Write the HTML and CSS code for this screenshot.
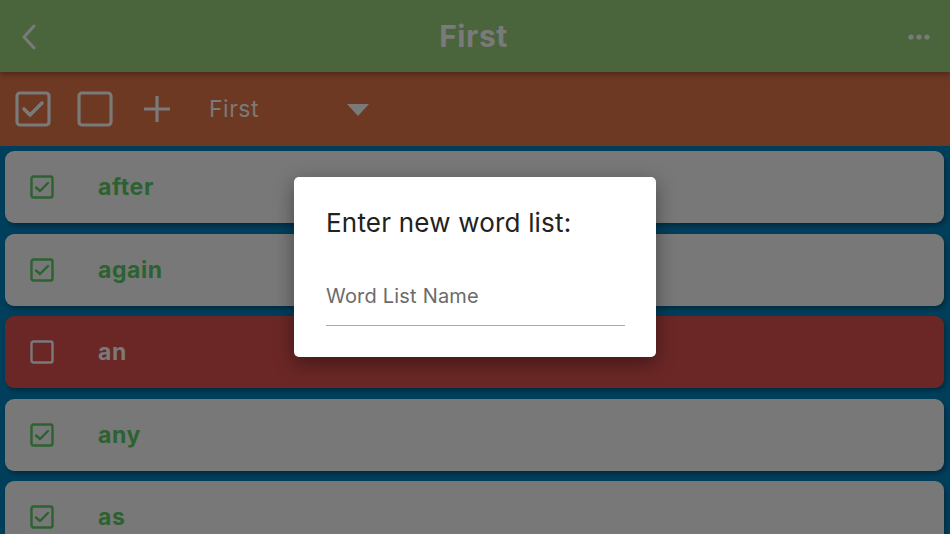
FILE: index.html
```html
<!DOCTYPE html>
<html>
<head>
<meta charset="utf-8">
<link rel="stylesheet" href="styles.css">
</head>
<body>
<div class="app">
  <header class="nav">
    <svg class="back" width="16" height="26" viewBox="0 0 16 26"><path d="M13 2 L3 13 L13 24" fill="none" stroke="#7a7a7a" stroke-width="3" stroke-linecap="round" stroke-linejoin="round"/></svg>
    <div class="title">First</div>
    <svg class="more" width="22" height="6" viewBox="0 0 22 6"><circle cx="3" cy="3" r="2.6" fill="#7a7a7a"/><circle cx="11" cy="3" r="2.6" fill="#7a7a7a"/><circle cx="19" cy="3" r="2.6" fill="#7a7a7a"/></svg>
  </header>
  <div class="toolbar">
    <svg class="tb-icon" width="36" height="36" viewBox="0 0 36 36"><rect x="2" y="2" width="32" height="32" rx="3" fill="none" stroke="#7a7a7a" stroke-width="3.2"/><path d="M9 18 L15 24 L27 12" fill="none" stroke="#7a7a7a" stroke-width="3.6" stroke-linecap="round" stroke-linejoin="round"/></svg>
    <svg class="tb-icon" width="36" height="36" viewBox="0 0 36 36"><rect x="2" y="2" width="32" height="32" rx="3" fill="none" stroke="#7a7a7a" stroke-width="3.2"/></svg>
    <svg class="tb-plus" width="28" height="28" viewBox="0 0 28 28"><path d="M14 1 V27 M1 14 H27" stroke="#7a7a7a" stroke-width="3.2"/></svg>
    <div class="picker">
      <span class="picker-text">First</span>
      <svg width="22" height="12" viewBox="0 0 22 12"><path d="M0 0 H22 L11 12 Z" fill="#7a7a7a"/></svg>
    </div>
  </div>
  <main class="list">
    <div class="row"><svg class="cb" width="24" height="24" viewBox="0 0 24 24"><rect x="1.5" y="1.5" width="21" height="21" rx="2" fill="none" stroke="#2b6230" stroke-width="2.4"/><path d="M6 12.5 L10 16 L18 8" fill="none" stroke="#2b6230" stroke-width="2.4" stroke-linecap="round" stroke-linejoin="round"/></svg><span class="word">after</span></div>
    <div class="row"><svg class="cb" width="24" height="24" viewBox="0 0 24 24"><rect x="1.5" y="1.5" width="21" height="21" rx="2" fill="none" stroke="#2b6230" stroke-width="2.4"/><path d="M6 12.5 L10 16 L18 8" fill="none" stroke="#2b6230" stroke-width="2.4" stroke-linecap="round" stroke-linejoin="round"/></svg><span class="word">again</span></div>
    <div class="row row-off"><svg class="cb" width="24" height="24" viewBox="0 0 24 24"><rect x="1.5" y="1.5" width="21" height="21" rx="2" fill="none" stroke="#7a7a7a" stroke-width="2.4"/></svg><span class="word">an</span></div>
    <div class="row"><svg class="cb" width="24" height="24" viewBox="0 0 24 24"><rect x="1.5" y="1.5" width="21" height="21" rx="2" fill="none" stroke="#2b6230" stroke-width="2.4"/><path d="M6 12.5 L10 16 L18 8" fill="none" stroke="#2b6230" stroke-width="2.4" stroke-linecap="round" stroke-linejoin="round"/></svg><span class="word">any</span></div>
    <div class="row"><svg class="cb" width="24" height="24" viewBox="0 0 24 24"><rect x="1.5" y="1.5" width="21" height="21" rx="2" fill="none" stroke="#2b6230" stroke-width="2.4"/><path d="M6 12.5 L10 16 L18 8" fill="none" stroke="#2b6230" stroke-width="2.4" stroke-linecap="round" stroke-linejoin="round"/></svg><span class="word">as</span></div>
  </main>
  <div class="dialog">
    <div class="dialog-title">Enter new word list:</div>
    <div class="field">Word List Name</div>
  </div>
</div>
</body>
</html>
```

FILE: styles.css
```css
* { box-sizing: border-box; }
html, body { margin: 0; padding: 0; }
body {
  width: 950px;
  height: 534px;
  overflow: hidden;
  font-family: Inter, "Open Sans", sans-serif;
  background: #003f5c;
}
.app {
  position: relative;
  width: 950px;
  height: 534px;
  overflow: hidden;
  background: #003f5c;
}
.nav {
  height: 72px;
  background: #4a653c;
  display: flex;
  align-items: center;
  justify-content: space-between;
  padding: 0 20px 0 21px;
  position: relative;
  z-index: 2;
  box-shadow: 0 2px 6px rgba(0,0,0,0.35);
}
.back { margin-top: 2px; }
.title {
  font-size: 30px;
  font-weight: 700;
  color: #7a7a7a;
  margin-left: 2px;
  letter-spacing: 0.6px;
}
.more { margin-top: 1px; }
.toolbar {
  height: 74px;
  background: #6e3923;
  display: flex;
  align-items: center;
  padding: 0 0 0 15px;
  position: relative;
  z-index: 1;
}
.tb-icon { margin-right: 26px; }
.tb-plus { margin-left: 4px; margin-right: 38px; }
.picker {
  display: flex;
  align-items: center;
  width: 160px;
  justify-content: space-between;
}
.picker-text {
  font-size: 23px;
  color: #7a7a7a;
  letter-spacing: 0.5px;
}
.picker svg { margin-top: 2px; }
.list {
  display: flex;
  flex-direction: column;
  gap: 10.5px;
  padding: 5px 6px 0 5px;
}
.row {
  flex: none;
  height: 72px;
  border-radius: 9px;
  background: #787878;
  display: flex;
  align-items: center;
  padding-left: 25px;
  box-shadow: 2px 3px 5px rgba(0,0,0,0.3);
}
.row-off { background: #6b2726; }
.cb { flex: none; margin-right: 44px; }
.word {
  font-size: 23px;
  font-weight: 700;
  color: #2b6230;
  letter-spacing: 0.6px;
}
.row-off .word { color: #7a7a7a; }
.dialog {
  position: absolute;
  left: 294px;
  top: 177px;
  width: 362px;
  height: 180px;
  background: #ffffff;
  border-radius: 5px;
  box-shadow: 0 6px 20px rgba(0,0,0,0.4);
  padding: 30px 31px 0 32px;
  z-index: 5;
}
.dialog-title {
  font-size: 26px;
  color: #222222;
  letter-spacing: 0.2px;
}
.field {
  margin-top: 46px;
  font-size: 20px;
  color: #6b6b6b;
  padding-bottom: 17px;
  border-bottom: 1.5px solid #aaaaaa;
  letter-spacing: 0.2px;
}
```
